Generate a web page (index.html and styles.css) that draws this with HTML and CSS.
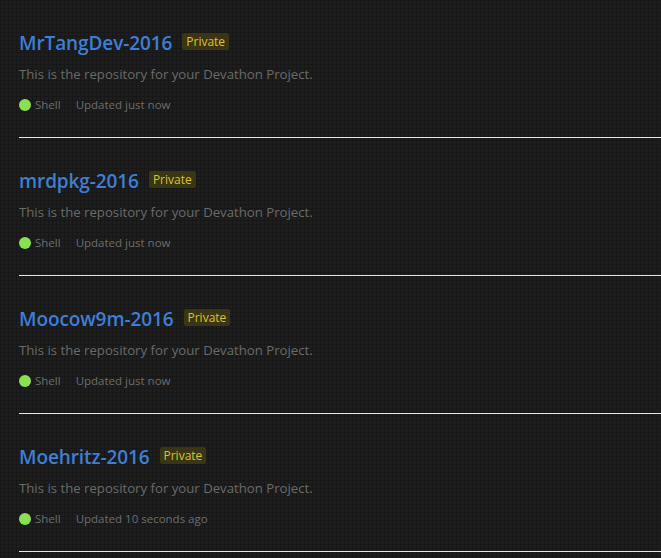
FILE: index.html
```
<!DOCTYPE html>
<html>
<head>
<meta charset="utf-8">
<link rel="stylesheet" href="styles.css">
</head>
<body>
<ul class="repo-list">
  <li class="repo">
    <div class="repo-head"><a class="repo-name">MrTangDev-2016</a><span class="badge">Private</span></div>
    <p class="repo-desc">This is the repository for your Devathon Project.</p>
    <div class="repo-meta"><span class="lang"><span class="dot"></span>Shell</span><span class="updated">Updated just now</span></div>
  </li>
  <li class="repo">
    <div class="repo-head"><a class="repo-name">mrdpkg-2016</a><span class="badge">Private</span></div>
    <p class="repo-desc">This is the repository for your Devathon Project.</p>
    <div class="repo-meta"><span class="lang"><span class="dot"></span>Shell</span><span class="updated">Updated just now</span></div>
  </li>
  <li class="repo">
    <div class="repo-head"><a class="repo-name">Moocow9m-2016</a><span class="badge">Private</span></div>
    <p class="repo-desc">This is the repository for your Devathon Project.</p>
    <div class="repo-meta"><span class="lang"><span class="dot"></span>Shell</span><span class="updated">Updated just now</span></div>
  </li>
  <li class="repo">
    <div class="repo-head"><a class="repo-name">Moehritz-2016</a><span class="badge">Private</span></div>
    <p class="repo-desc">This is the repository for your Devathon Project.</p>
    <div class="repo-meta"><span class="lang"><span class="dot"></span>Shell</span><span class="updated">Updated 10 seconds ago</span></div>
  </li>
</ul>
</body>
</html>
```
FILE: styles.css
```
html, body {
  margin: 0;
  padding: 0;
}
body {
  width: 661px;
  height: 558px;
  overflow: hidden;
  background-color: #1e1e1e;
  background-image:
    linear-gradient(to right, #171717 1px, transparent 1px),
    linear-gradient(to bottom, #171717 1px, transparent 1px);
  background-size: 4px 4px;
  font-family: "Open Sans", "Noto Sans", sans-serif;
}
.repo-list {
  list-style: none;
  margin: 0;
  padding: 0 0 0 19px;
}
.repo {
  height: 138px;
  border-bottom: 1px solid #e6e6e6;
  box-sizing: border-box;
  padding-top: 30px;
}
.repo-head {
  display: flex;
  align-items: center;
  height: 26px;
}
.repo-name {
  color: #3d7fd6;
  font-size: 19px;
  font-weight: 600;
  letter-spacing: -0.1px;
}
.badge {
  margin-left: 10px;
  margin-bottom: 3px;
  background: #3a3512;
  color: #ddc22e;
  font-size: 12px;
  line-height: 17px;
  padding: 0 4px;
  border-radius: 2px;
}
.repo-desc {
  margin: 8px 0 0;
  color: #6a6a6a;
  font-size: 13.2px;
  line-height: 20px;
}
.repo-meta {
  display: flex;
  align-items: center;
  margin-top: 13px;
  font-size: 11.5px;
  color: #6d6d6d;
}
.lang {
  display: flex;
  align-items: center;
}
.dot {
  width: 12px;
  height: 12px;
  border-radius: 50%;
  background: #89e051;
  margin-right: 4px;
}
.updated {
  margin-left: 15px;
}
```
